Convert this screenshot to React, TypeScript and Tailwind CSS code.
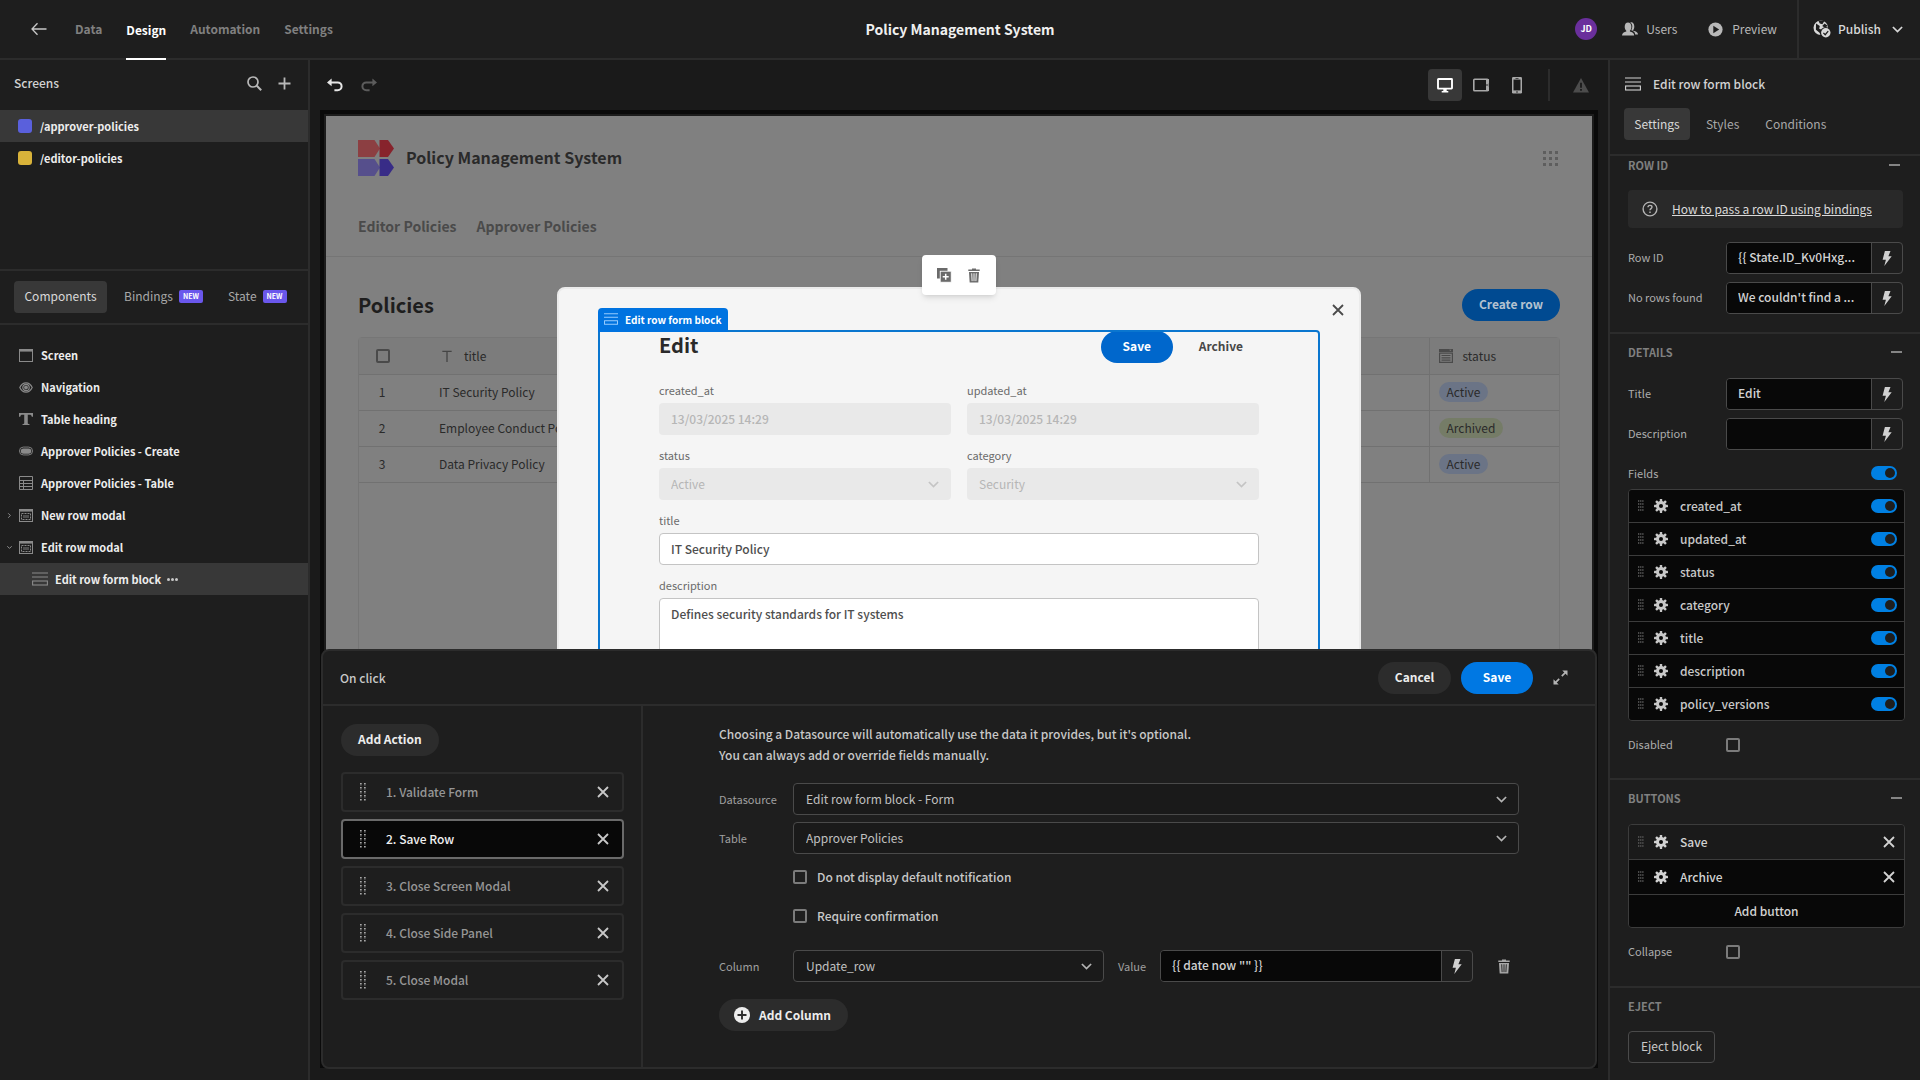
import React from 'react';
import { RiText } from 'react-icons/ri';

type IconProps = { className?: string };

const screens = [
    { path: '/approver-policies', swatch: 'bg-[#5a60dc]', selected: true },
    { path: '/editor-policies', swatch: 'bg-[#d9b33a]', selected: false },
];

const policies = [
    { id: 1, title: 'IT Security Policy', status: 'Active' },
    { id: 2, title: 'Employee Conduct Policy', status: 'Archived' },
    { id: 3, title: 'Data Privacy Policy', status: 'Active' },
];

const actions = ['Validate Form', 'Save Row', 'Close Screen Modal', 'Close Side Panel', 'Close Modal'];

const fields = ['created_at', 'updated_at', 'status', 'category', 'title', 'description', 'policy_versions'];

/* ---------- icons ---------- */

const BackIcon = () => (
    <svg width="16" height="14" viewBox="0 0 16 14" fill="none" stroke="currentColor" strokeWidth="1.3">
        <path d="M1 7h14.5M6.5 1.2 1 7l5.500 5.800" />
    </svg>
);

const SearchIcon = () => (
    <svg width="15" height="15" viewBox="0 0 15 15" fill="none" stroke="currentColor" strokeWidth="1.7">
        <circle cx="6" cy="6" r="5" />
        <path d="m9.800 9.800 4.400 4.400" strokeWidth="2" />
    </svg>
);

const PlusIcon = () => (
    <svg width="13" height="13" viewBox="0 0 13 13" fill="none" stroke="currentColor" strokeWidth="1.8">
        <path d="M6.500.500v12M.500 6.500h12" />
    </svg>
);

const UndoIcon = ({ className }: IconProps) => (
    <svg className={className} width="16" height="14" viewBox="0 0 16 14">
        <path d="M0 4.400 4.600.600v7.600z" fill="currentColor" />
        <path d="M3.500 4.400h7.200a3.800 3.800 0 0 1 0 7.800H7.400" fill="none" stroke="currentColor" strokeWidth="2" />
    </svg>
);

const ChevronDown = ({ className }: IconProps) => (
    <svg className={className} width="11" height="7" viewBox="0 0 11 7" fill="none" stroke="currentColor" strokeWidth="1.7">
        <path d="m.9 1 4.600 4.600L10.100 1" />
    </svg>
);

const CrossIcon = ({ className }: IconProps) => (
    <svg className={className} width="12" height="12" viewBox="0 0 12 12" fill="none" stroke="currentColor" strokeWidth="1.8">
        <path d="m1 1 10 10M11 1 1 11" />
    </svg>
);

const UsersIcon = () => (
    <svg width="16" height="14" viewBox="0 0 16 14" fill="currentColor">
        <path d="M10.800 8.400c1-.9 1.500-2.400 1.500-4C12.300 1.900 11.100.2 9.300.2c-.4 0-.7.1-1 .2 1.300.8 2 2.300 2 4.200 0 1.400-.4 2.700-1.100 3.700 2 .6 3.800 1.800 4 4.200H16c0-2.400-2.400-3.300-4.600-3.800-.4-.1-.6-.1-.6-.3z" />
        <path d="M6 .6C4.100.6 2.700 2.200 2.700 4.700c0 1.600.6 3.100 1.600 4v.7C2.100 9.900 0 11 0 13.600h12.200c0-2.500-2-3.700-4.300-4.200v-.7c1-.9 1.500-2.400 1.500-4C9.400 2.200 7.900.6 6 .6z" />
    </svg>
);

const PlayIcon = () => (
    <svg width="15" height="15" viewBox="0 0 15 15">
        <circle cx="7.500" cy="7.500" r="7.100" fill="currentColor" />
        <path d="M5.300 3.800 11.200 7.500l-5.900 3.700z" fill="#1e1e1e" />
    </svg>
);

const PublishIcon = () => (
    <svg width="18" height="18" viewBox="0 0 18 18">
        <circle cx="7.800" cy="7.800" r="7.300" fill="currentColor" />
        <path d="m5.200.6 1.600 2.800 2.600.8L11.500.8M3 3.400 6.800 6l-.6 2.800 2.600 1-.8 5.400-1.700-2.700-3.400-2.800M11.600 3.600 9.200 6l2.400 1.500 3.400-1.400" fill="#1e1e1e" />
        <circle cx="12.800" cy="12.800" r="5.800" fill="#1e1e1e" />
        <circle cx="12.800" cy="12.800" r="4.700" fill="currentColor" />
        <path d="m10.400 12.900 1.800 1.800 3-3.600" fill="none" stroke="#1e1e1e" strokeWidth="1.300" />
    </svg>
);

const DesktopIcon = () => (
    <svg width="16" height="15" viewBox="0 0 16 15">
        <rect x="1" y="1" width="14" height="9.600" rx=".5" fill="none" stroke="currentColor" strokeWidth="1.900" />
        <path d="M6.300 11h3.400v2h1.600v1.600H4.700V13h1.600z" fill="currentColor" />
    </svg>
);

const TabletIcon = () => (
    <svg width="16" height="14" viewBox="0 0 16 14">
        <rect x=".8" y="1.300" width="14.200" height="11.400" rx=".8" fill="none" stroke="currentColor" strokeWidth="1.600" />
        <path d="M13 1h3v4l-1 .8v2.400l1 .8v4h-3z" fill="currentColor" />
        <circle cx="14" cy="7" r=".8" fill="#1a1a1a" />
    </svg>
);

const PhoneIcon = () => (
    <svg width="10" height="17" viewBox="0 0 10 17">
        <rect width="10" height="16.500" rx="1.200" fill="currentColor" />
        <path d="M1.500 2.600h7v10.800h-7z" fill="#1a1a1a" />
        <circle cx="5" cy="15" r=".8" fill="#1a1a1a" />
        <path d="M3.500 1h3v.7h-3z" fill="#1a1a1a" />
    </svg>
);

const AlertIcon = () => (
    <svg width="16" height="15" viewBox="0 0 16 15">
        <path d="M8 0 16 14.500H0z" fill="currentColor" />
        <path d="M7.100 4.800h1.800v5H7.100zM7.100 11h1.800v1.800H7.100z" fill="#1a1a1a" />
    </svg>
);

const FormBlockIcon = ({ className }: IconProps) => (
    <svg className={className} width="16" height="14" viewBox="0 0 16 14" fill="none" stroke="currentColor" strokeWidth="1.100">
        <path d="M0 1h16M0 5h16" />
        <rect x=".6" y="9" width="14.800" height="4" />
    </svg>
);

const WindowIcon = () => (
    <svg width="14" height="13" viewBox="0 0 14 13">
        <rect x=".5" y=".5" width="13" height="12" fill="none" stroke="currentColor" />
        <path d="M0 0h14v2.600H0z" fill="currentColor" />
    </svg>
);

const EyeIcon = () => (
    <svg width="14" height="11" viewBox="0 0 14 11" fill="none" stroke="currentColor" strokeWidth="1.200">
        <path d="M.8 5.500C2.200 2.500 4.400.9 7 .9s4.800 1.600 6.200 4.600C11.800 8.500 9.600 10.100 7 10.100S2.200 8.500.8 5.500z" />
        <circle cx="7" cy="5.500" r="3.200" />
        <circle cx="7" cy="5.500" r="1.300" fill="currentColor" />
    </svg>
);

const HeadingIcon = () => (
    <svg width="15" height="14" viewBox="0 0 15 14" fill="currentColor">
        <path d="M0 .5h15v4h-1.300c-.3-1.500-1-2.100-2.500-2.100H9.400v8.800c0 .8.300 1.100 1.800 1.200v.9H3.800v-.9c1.500-.1 1.800-.4 1.800-1.200V2.400H3.800C2.300 2.400 1.600 3 1.300 4.500H0z" />
    </svg>
);

const PillIcon = () => (
    <svg width="16" height="10" viewBox="0 0 16 10">
        <rect x=".5" y=".5" width="15" height="9" rx="4.500" fill="none" stroke="currentColor" />
        <rect x="2" y="2" width="12" height="6" rx="3" fill="currentColor" />
    </svg>
);

const TableIcon = () => (
    <svg width="14" height="14" viewBox="0 0 14 14" fill="none" stroke="currentColor">
        <path d="M.5.500h13v13H.5zM.5 4.500h13M.5 7.500h13M.5 10.500h13M4.500 4.500v9" />
    </svg>
);

const ModalIcon = () => (
    <svg width="14" height="13" viewBox="0 0 14 13">
        <rect x=".5" y=".5" width="13" height="12" fill="none" stroke="currentColor" />
        <path d="M0 0h14v2.600H0z" fill="currentColor" />
        <rect x="2.500" y="4.500" width="9" height="6" fill="none" stroke="currentColor" strokeDasharray="2 1" />
        <path d="M4 6h6v3H4z" fill="currentColor" opacity=".45" />
    </svg>
);

const BoltIcon = () => (
    <svg width="10" height="15" viewBox="0 0 10 15" fill="currentColor">
        <path d="M2.900 0h5.600L6.400 5.200h3.300L2.300 15l1.600-6.200H.6z" />
    </svg>
);

const TrashIcon = ({ className }: IconProps) => (
    <svg className={className} width="12" height="15" viewBox="0 0 12 15">
        <path d="M4 .4h4v1.200h3.700v1.500H.3V1.600H4z" fill="currentColor" />
        <path d="M1 4h10l-.7 10.500H1.700z" fill="currentColor" />
        <path d="m3.700 5.300.4 7.800M6 5.300v7.800M8.300 5.300l-.4 7.800" className="stroke-(--cut)" strokeWidth=".9" fill="none" />
    </svg>
);

const DuplicateIcon = () => (
    <svg width="15" height="15" viewBox="0 0 15 15">
        <path d="M0 0h10.500v3H3v7.500H0z" fill="currentColor" />
        <rect x="3.200" y="3.200" width="11" height="11" fill="currentColor" stroke="#fff" strokeWidth=".8" />
        <path d="M8.700 5.700v6M5.700 8.700h6" stroke="#fff" strokeWidth="1.500" />
    </svg>
);

const GearIcon = () => (
    <svg width="14" height="14" viewBox="0 0 14 14">
        <g fill="currentColor">
            <circle cx="7" cy="7" r="5" />
            {[0, 45, 90, 135].map((a) => (
                <rect key={a} x="5.800" y="0" width="2.400" height="14" rx=".4" transform={`rotate(${a} 7 7)`} />
            ))}
        </g>
        <circle cx="7" cy="7" r="2" fill="#0a0a0a" />
    </svg>
);

const DragDots = ({ className }: IconProps) => (
    <svg className={className} width="6" height="12" viewBox="0 0 6 12" fill="currentColor">
        {[0, 3, 6, 9].map((y) => (
            <g key={y}>
                <rect x="0" y={y} width="1.300" height="2" />
                <rect x="2.100" y={y} width="1.300" height="2" />
                <rect x="4.200" y={y} width="1.300" height="2" />
            </g>
        ))}
    </svg>
);

const DragHandle = () => (
    <svg width="6" height="18" viewBox="0 0 6 18" fill="currentColor">
        {[0, 4, 8, 12, 16].map((y) => (
            <g key={y}>
                <rect x="0" y={y} width="1.700" height="1.500" />
                <rect x="4" y={y} width="1.700" height="1.500" />
                <rect x="0" y={y + 2} width="1.700" height=".6" opacity=".5" />
                <rect x="4" y={y + 2} width="1.700" height=".6" opacity=".5" />
            </g>
        ))}
    </svg>
);

const ExpandIcon = () => (
    <svg width="15" height="15" viewBox="0 0 15 15">
        <path d="M9.300.5h5.200v5.200zM.5 9.300v5.200h5.200z" fill="currentColor" />
        <path d="m8.800 6.200 3.500-3.500M6.200 8.800l-3.500 3.500" stroke="currentColor" strokeWidth="1.700" />
    </svg>
);

const AddCircleIcon = () => (
    <svg width="16" height="16" viewBox="0 0 16 16">
        <circle cx="8" cy="8" r="8" fill="currentColor" />
        <path d="M8 3.500v9M3.500 8h9" stroke="#2c2c2c" strokeWidth="1.900" />
    </svg>
);

const HelpIcon = () => (
    <svg width="16" height="16" viewBox="0 0 16 16" fill="none" stroke="currentColor" strokeWidth="1.400">
        <circle cx="8" cy="8" r="6.900" />
        <path d="M6 6.200C6 5 6.900 4.400 8 4.400s2 .7 2 1.700c0 1.500-2 1.500-2 3.200M8 10.500v1.500" />
    </svg>
);

const OptionsIcon = () => (
    <svg width="14" height="14" viewBox="0 0 14 14">
        <path d="M0 0h14v3H0z" fill="currentColor" />
        <path d="m10.200.8 1.100 1.300 1.100-1.300z" fill="#808080" />
        <path d="M.6 4.200h12.800v9.200H.6zM2.500 6.500h9M2.500 8.800h9M2.500 11.100h9" fill="none" stroke="currentColor" strokeWidth="1.200" />
    </svg>
);

const GridDots = () => (
    <svg width="15" height="15" viewBox="0 0 15 15" fill="currentColor">
        {[0, 6, 12].map((y) => [0, 6, 12].map((x) => <rect key={`${x}-${y}`} x={x} y={y} width="3" height="3" />))}
    </svg>
);

const Logo = () => (
    <svg width="36" height="36" viewBox="0 0 36 36">
        <path d="M0 0h16.500L22 8.500 16.500 17H0z" fill="#8c3f42" />
        <path d="M21.500 0H30l6 8.500-6 8.500h-8.500z" fill="#87232c" />
        <path d="M0 19h16.500l5.500 8.500-5.500 8.500H0z" fill="#564f8c" />
        <path d="M21.500 19H30l6 8.500-6 8.500h-8.500z" fill="#382c87" />
    </svg>
);

/* ---------- small parts ---------- */

const NewBadge = () => (
    <span className="flex h-[13px] items-center rounded-[2px] bg-[#6a57ec] px-1 text-[7px] leading-[13px] font-bold text-white">NEW</span>
);

const Toggle: React.FC<{ label: string }> = ({ label }) => (
    <input
        type="checkbox"
        role="switch"
        aria-label={label}
        defaultChecked
        className="relative h-3.5 w-[26px] shrink-0 appearance-none rounded-full bg-[#0080e3] before:absolute before:top-0.5 before:right-0.5 before:size-2.5 before:rounded-full before:bg-[#1e1e1e]"
    />
);

const Checkbox: React.FC<{ id: string }> = ({ id }) => (
    <input id={id} type="checkbox" className="size-3.5 shrink-0 appearance-none rounded-[2px] border-2 border-[#7b7b7b]" />
);

const BindingInput: React.FC<{ id: string; value: string }> = ({ id, value }) => (
    <div className="flex h-8 min-w-0 flex-1 overflow-hidden rounded-sm border border-[#4a4a4a]">
        <input id={id} defaultValue={value} className="min-w-0 flex-1 bg-[#080808] px-[11px] pb-0.5 text-xs font-medium text-[#d2d2d2]" />
        <button aria-label="Bind value" className="flex w-[31px] items-center justify-center border-l border-[#4a4a4a] text-[#d0d0d0]">
            <BoltIcon />
        </button>
    </div>
);

const PanelSelect: React.FC<{ id: string; value: string }> = ({ id, value }) => (
    <div className="relative min-w-0 flex-1">
        <select id={id} className="h-8 w-full appearance-none rounded-sm border border-[#4a4a4a] bg-[#1a1a1a] px-3 text-xs text-[#c0c0c0]">
            <option>{value}</option>
        </select>
        <ChevronDown className="pointer-events-none absolute top-[13px] right-3 text-[#b4b4b4]" />
    </div>
);

const SettingRow: React.FC<{ label: string; id: string; children: React.ReactNode }> = ({ label, id, children }) => (
    <div className="flex h-8 items-center">
        <label htmlFor={id} className="w-[98px] shrink-0 pb-px text-[11px] text-[#adadad]">{label}</label>
        {children}
    </div>
);

const SectionTitle: React.FC<{ title: string; collapsible?: boolean }> = ({ title, collapsible = true }) => (
    <div className="flex h-5 items-center justify-between pr-[3px] pb-0.5">
        <h3 className="text-[11px] font-bold text-[#808080]">{title}</h3>
        {collapsible && <button aria-label={`Collapse ${title}`} className="h-0.5 w-[11px] bg-[#858585]" />}
    </div>
);

const TreeRow: React.FC<{ icon: React.ReactNode; label: string; arrow?: 'open' | 'closed' }> = ({ icon, label, arrow }) => (
    <li className="flex h-8 items-center text-[11px] font-bold text-[#ededed]">
        <span className="flex w-[19px] justify-center text-[#8f8f8f]">
            {arrow && (
                <svg width="5" height="5" viewBox="0 0 5 5" fill="none" stroke="currentColor" className={arrow === 'closed' ? '-rotate-90' : ''}>
                    <path d="m.3 1.200 2.200 2.200 2.200-2.200" />
                </svg>
            )}
        </span>
        <span className="flex w-3.5 justify-center text-[#8a8a8a]">{icon}</span>
        <span className="ml-2">{label}</span>
    </li>
);

/* ---------- layout ---------- */

const TopBar = () => (
    <header className="grid h-[60px] shrink-0 grid-cols-[1fr_auto_1fr] border-b-2 border-[#2c2c2c] text-xs">
        <nav className="flex items-center gap-6 pl-[31px] font-bold text-[#808080]">
            <button aria-label="Back" className="mr-1 text-[#c8c8c8]"><BackIcon /></button>
            <a href="#data">Data</a>
            <a href="#design" className="-mb-0.5 flex h-[60px] items-center border-y-2 border-t-transparent border-b-white text-white">Design</a>
            <a href="#automation">Automation</a>
            <a href="#settings">Settings</a>
        </nav>
        <h1 className="flex items-center text-sm font-bold text-[#f0f0f0]">Policy Management System</h1>
        <div className="flex items-center justify-end text-[#b8b8b8]">
            <span className="mr-[25px] flex size-[22px] items-center justify-center rounded-full bg-[#6a2f9c] text-[9px] font-bold text-white">JD</span>
            <button className="mr-[31px] flex items-center gap-2"><UsersIcon />Users</button>
            <button className="mr-5 flex items-center gap-[9px]"><PlayIcon />Preview</button>
            <button className="flex h-full items-center gap-[7px] border-l-2 border-[#2c2c2c] pr-[17px] pl-3.5 font-medium text-[#d8d8d8]">
                <PublishIcon />
                Publish
                <ChevronDown className="ml-1" />
            </button>
        </div>
    </header>
);

const LeftPanel = () => (
    <aside className="flex w-[310px] shrink-0 flex-col border-r-2 border-[#2c2c2c]">
        <section className="h-[211px] border-b-2 border-[#2c2c2c]">
            <div className="flex h-[50px] items-center pr-[17px] pb-1 pl-3.5 text-[#b8b8b8]">
                <h2 className="flex-1 text-xs font-medium text-[#d2d2d2]">Screens</h2>
                <button aria-label="Search screens" className="mr-4"><SearchIcon /></button>
                <button aria-label="Add screen"><PlusIcon /></button>
            </div>
            <ul>
                {screens.map((s) => (
                    <li key={s.path} className={`flex h-8 items-center gap-2 pl-[18px] text-[11px] font-bold text-[#ededed] ${s.selected ? 'bg-[#383838]' : ''}`}>
                        <span className={`size-3.5 rounded-[3px] ${s.swatch}`} />
                        {s.path}
                    </li>
                ))}
            </ul>
        </section>
        <div className="flex h-[54px] items-center border-b-2 border-[#2c2c2c] pl-3.5 text-xs text-[#a8a8a8]">
            <button className="h-8 w-[93px] rounded-sm bg-[#383838] pb-0.5 text-[#d8d8d8]">Components</button>
            <button className="ml-[17px] flex items-center gap-1.5 pb-0.5">Bindings <NewBadge /></button>
            <button className="ml-[25px] flex items-center gap-1.5 pb-0.5">State <NewBadge /></button>
        </div>
        <ul className="pt-3.5">
            <TreeRow icon={<WindowIcon />} label="Screen" />
            <TreeRow icon={<EyeIcon />} label="Navigation" />
            <TreeRow icon={<HeadingIcon />} label="Table heading" />
            <TreeRow icon={<PillIcon />} label="Approver Policies - Create" />
            <TreeRow icon={<TableIcon />} label="Approver Policies - Table" />
            <TreeRow icon={<ModalIcon />} label="New row modal" arrow="closed" />
            <TreeRow icon={<ModalIcon />} label="Edit row modal" arrow="open" />
            <li className="flex h-8 items-center bg-[#383838] pl-8 text-[11px] font-bold text-[#ededed]">
                <FormBlockIcon className="mr-[7px] text-[#8a8a8a]" />
                Edit row form block
                <button aria-label="More" className="ml-1.5 flex gap-px text-[#c8c8c8]">
                    <span className="size-[3px] rounded-full bg-current" />
                    <span className="size-[3px] rounded-full bg-current" />
                    <span className="size-[3px] rounded-full bg-current" />
                </button>
            </li>
        </ul>
    </aside>
);

const CanvasToolbar = () => (
    <div className="flex h-[50px] shrink-0 items-center pr-[19px] pl-[17px] text-[#a8a8a8]">
        <button aria-label="Undo" className="text-[#e6e6e6]"><UndoIcon /></button>
        <button aria-label="Redo" className="ml-[18px] text-[#5c5c5c]"><UndoIcon className="-scale-x-100" /></button>
        <div className="flex-1" />
        <button aria-label="Desktop" className="flex h-8 w-[34px] items-center justify-center rounded-sm bg-[#383838] text-white"><DesktopIcon /></button>
        <button aria-label="Tablet" className="ml-[11px]"><TabletIcon /></button>
        <button aria-label="Mobile" className="ml-[23px]"><PhoneIcon /></button>
        <span className="mr-[23px] ml-[26px] h-8 w-0.5 bg-[#2c2c2c]" />
        <button aria-label="Warnings" className="text-[#4c4c4c]"><AlertIcon /></button>
    </div>
);

const AppPage = () => (
    <div className="flex h-full flex-col text-[#2a2a2a]">
        <div className="h-[141px] shrink-0 border-b border-[#757575] px-8 pt-6">
            <div className="flex items-center">
                <Logo />
                <span className="ml-3 flex-1 pb-0.5 text-base leading-[34px] font-bold">Policy Management System</span>
                <button aria-label="Apps" className="mr-0.5 text-[#5e5e5e]"><GridDots /></button>
            </div>
            <nav className="mt-[38px] flex gap-5 text-sm leading-6 font-bold text-[#4a4a4a]">
                <a href="#editor">Editor Policies</a>
                <a href="#approver">Approver Policies</a>
            </nav>
        </div>
        <div className="flex min-h-0 flex-1 flex-col px-8 pt-8">
            <div className="flex items-center justify-between">
                <h2 className="text-xl leading-8 font-bold text-[#1e1e1e]">Policies</h2>
                <button className="h-8 rounded-full bg-[#004a91] px-[17px] pb-0.5 text-xs font-bold text-[#b4c2d0]">Create row</button>
            </div>
            <div className="mt-4 flex-1 rounded-t-sm border border-[#767676]">
                <table className="w-full table-fixed border-collapse text-left text-xs">
                    <thead>
                        <tr className="h-9 border-b border-[#717171] bg-[#7c7c7c]">
                            <th className="w-[71px] pl-[17px]">
                                <input type="checkbox" aria-label="Select all" className="block size-3.5 appearance-none rounded-[2px] border-2 border-[#4a4a4a]" />
                            </th>
                            <th className="pl-[9px] font-normal">
                                <span className="flex items-center gap-[9px]"><RiText size={16} className="text-[#454545]" />title</span>
                            </th>
                            <th className="w-[130px] border-l border-[#717171] pl-[9px] font-normal">
                                <span className="flex items-center gap-2.5"><span className="text-[#4a4a4a]"><OptionsIcon /></span>status</span>
                            </th>
                        </tr>
                    </thead>
                    <tbody>
                        {policies.map((p) => (
                            <tr key={p.id} className="h-9 border-b border-[#717171]">
                                <td className="pl-4"><span className="block w-3.5 text-center">{p.id}</span></td>
                                <td className="pl-[9px]">{p.title}</td>
                                <td className="border-l border-[#717171] pl-[9px]">
                                    <span className={`inline-block rounded-[10px] px-2 leading-5 ${p.status === 'Active' ? 'bg-[#6b7486]' : 'bg-[#757c67]'}`}>{p.status}</span>
                                </td>
                            </tr>
                        ))}
                    </tbody>
                </table>
            </div>
        </div>
    </div>
);

const formLabel = 'block h-[26px] text-[11px] leading-[26px] text-[#6a6a6a]';

const EditModal = () => (
    <div className="absolute top-[171px] bottom-0 left-1/2 w-[804px] -translate-x-1/2 rounded-t-lg border-2 border-[#ebebeb] bg-[#f5f5f5]">
        <div className="flex h-[41px] items-center justify-end pr-[15px]">
            <button aria-label="Close" className="text-[#4a4a4a]"><CrossIcon /></button>
        </div>
        <form className="relative mx-[39px] h-full px-[61px] pt-px">
            {/* selection outline with its tag */}
            <div className="pointer-events-none absolute inset-0 z-10 rounded-tr-sm border-2 border-[#0a76cf]">
                <div className="absolute -top-6 -left-0.5 flex h-6 items-center gap-[7px] rounded-t-sm bg-[#0073e0] px-1.5 pb-0.5 text-[10px] font-bold text-white">
                    <FormBlockIcon className="h-3.5 w-3.5 text-[#9ccfff]" />
                    Edit row form block
                </div>
            </div>
            <div className="mb-3.5 flex h-8 items-center">
                <h2 className="flex-1 pb-1 text-xl font-bold text-[#2a2a2a]">Edit</h2>
                <button type="button" className="h-8 w-[72px] rounded-full bg-[#0067cc] pb-0.5 text-xs font-bold text-white">Save</button>
                <button type="button" className="ml-2.5 h-8 px-4 pb-0.5 text-xs font-bold text-[#474747]">Archive</button>
            </div>
            <div className="grid grid-cols-2 gap-x-4 gap-y-[7px]">
                {['created_at', 'updated_at'].map((f) => (
                    <div key={f}>
                        <label htmlFor={`f-${f}`} className={formLabel}>{f}</label>
                        <input id={`f-${f}`} disabled defaultValue="13/03/2025 14:29" className="block h-8 w-full rounded-sm bg-[#e9e9e9] px-3 pb-0.5 text-xs font-medium text-[#b6b6b6]" />
                    </div>
                ))}
                {[['status', 'Active'], ['category', 'Security']].map(([f, v]) => (
                    <div key={f} className="relative">
                        <label htmlFor={`f-${f}`} className={formLabel}>{f}</label>
                        <select id={`f-${f}`} disabled className="block h-8 w-full appearance-none rounded-sm bg-[#e9e9e9] px-3 text-xs text-[#b6b6b6] opacity-100">
                            <option>{v}</option>
                        </select>
                        <ChevronDown className="absolute right-3 bottom-3 text-[#c4c4c4]" />
                    </div>
                ))}
                <div className="col-span-2">
                    <label htmlFor="f-title" className={formLabel}>title</label>
                    <input id="f-title" defaultValue="IT Security Policy" className="block h-8 w-full rounded-sm border border-[#c4c4c4] bg-white px-[11px] pb-0.5 text-xs font-medium text-[#4e4e4e]" />
                </div>
                <div className="col-span-2">
                    <label htmlFor="f-description" className={formLabel}>description</label>
                    <textarea id="f-description" defaultValue="Defines security standards for IT systems" className="block h-[120px] w-full resize-none rounded-sm border border-[#c4c4c4] bg-white px-[11px] py-[5px] text-xs leading-5 font-medium text-[#4e4e4e]" />
                </div>
            </div>
        </form>
    </div>
);

const ActionDrawer = () => (
    <section className="absolute right-[11px] bottom-[11px] left-[11px] z-20 flex h-[420px] flex-col rounded-lg border-2 border-[#2c2c2c] bg-[#1e1e1e]">
        <div className="flex h-[55px] shrink-0 items-center border-b-2 border-[#2c2c2c] pr-[27px] pl-[17px] text-xs font-bold">
            <h2 className="flex-1 font-medium text-[#c8c8c8]">On click</h2>
            <button className="h-8 w-[73px] rounded-full bg-[#2c2c2c] pb-0.5 text-[#ededed]">Cancel</button>
            <button className="ml-2.5 h-8 w-[72px] rounded-full bg-[#0078e3] pb-0.5 text-white">Save</button>
            <button aria-label="Expand" className="ml-5 text-[#b4b4b4]"><ExpandIcon /></button>
        </div>
        <div className="flex min-h-0 flex-1">
            <div className="w-80 shrink-0 border-r-2 border-[#2c2c2c] pt-[18px] pr-[17px] pl-[18px]">
                <button className="h-8 rounded-full bg-[#2c2c2c] px-[17px] pb-0.5 text-xs font-bold text-[#ededed]">Add Action</button>
                <ol className="mt-4 flex flex-col gap-[7px]">
                    {actions.map((name, i) => (
                        <li
                            key={name}
                            className={`flex h-10 items-center rounded-sm border-2 pr-[13px] pl-[17px] text-xs font-medium ${i === 1 ? 'border-[#6a6a6a] bg-[#080808] text-[#f0f0f0]' : 'border-[#2c2c2c] text-[#969696]'}`}
                        >
                            <span className="text-[#a8a8a8]"><DragHandle /></span>
                            <span className="ml-5 flex-1">{i + 1}. {name}</span>
                            <button aria-label={`Remove ${name}`} className="text-[#c8c8c8]"><CrossIcon /></button>
                        </li>
                    ))}
                </ol>
            </div>
            <div className="flex-1 px-[76px] pt-[17px] text-[11px] text-[#a0a0a0]">
                <p className="text-xs leading-[21px] font-medium text-[#c8c8c8]">
                    Choosing a Datasource will automatically use the data it provides, but it's optional.
                    <br />
                    You can always add or override fields manually.
                </p>
                <div className="mt-[18px] flex items-center">
                    <label htmlFor="datasource" className="w-[74px]">Datasource</label>
                    <PanelSelect id="datasource" value="Edit row form block - Form" />
                </div>
                <div className="mt-[7px] flex items-center">
                    <label htmlFor="table" className="w-[74px]">Table</label>
                    <PanelSelect id="table" value="Approver Policies" />
                </div>
                <div className="mt-[7px] flex h-8 items-center gap-2.5 pl-[74px] text-xs font-medium text-[#c8c8c8]">
                    <Checkbox id="quiet" />
                    <label htmlFor="quiet">Do not display default notification</label>
                </div>
                <div className="mt-[7px] flex h-8 items-center gap-2.5 pl-[74px] text-xs font-medium text-[#c8c8c8]">
                    <Checkbox id="confirm" />
                    <label htmlFor="confirm">Require confirmation</label>
                </div>
                <div className="mt-[18px] flex items-center">
                    <label htmlFor="column" className="w-[74px]">Column</label>
                    <PanelSelect id="column" value="Update_row" />
                    <label htmlFor="value" className="w-14 pl-3.5">Value</label>
                    <BindingInput id="value" value={'{{ date now "" }}'} />
                    <button aria-label="Delete column" className="mr-2 ml-6 px-px text-[#a8a8a8] [--cut:#1e1e1e]"><TrashIcon /></button>
                </div>
                <button className="mt-[17px] flex h-8 items-center gap-[9px] rounded-full bg-[#2c2c2c] pr-[17px] pl-[15px] text-xs font-bold text-[#ededed]">
                    <AddCircleIcon />
                    Add Column
                </button>
            </div>
        </div>
    </section>
);

const RightPanel = () => (
    <aside className="flex w-[312px] shrink-0 flex-col border-l-2 border-[#2c2c2c]">
        <div className="h-24 border-b-2 border-[#2c2c2c] pl-3.5">
            <div className="flex h-12 items-center gap-3 pl-px text-xs font-medium text-[#d2d2d2]">
                <FormBlockIcon />
                Edit row form block
            </div>
            <div className="flex text-xs text-[#a8a8a8]">
                <button className="h-8 w-[66px] rounded-sm bg-[#383838] text-[#d8d8d8]">Settings</button>
                <button className="ml-4">Styles</button>
                <button className="ml-[26px]">Conditions</button>
            </div>
        </div>
        <section className="h-[178px] border-b-2 border-[#2c2c2c] pr-[17px] pl-[18px]">
            <SectionTitle title="ROW ID" />
            <div className="mt-3.5 flex h-[38px] items-center gap-3.5 rounded-sm bg-[#292929] pl-3.5 text-[#b4b4b4]">
                <HelpIcon />
                <a href="#help" className="text-xs text-[#dadada] underline">How to pass a row ID using bindings</a>
            </div>
            <div className="mt-3.5 flex flex-col gap-2">
                <SettingRow label="Row ID" id="row-id"><BindingInput id="row-id" value="{{ State.ID_Kv0Hxg..." /></SettingRow>
                <SettingRow label="No rows found" id="no-rows"><BindingInput id="no-rows" value="We couldn't find a ..." /></SettingRow>
            </div>
        </section>
        <section className="h-[446px] border-b-2 border-[#2c2c2c] pt-[9px] pr-[15px] pl-[18px]">
            <SectionTitle title="DETAILS" />
            <div className="mt-[15px] mr-0.5 flex flex-col gap-2">
                <SettingRow label="Title" id="title"><BindingInput id="title" value="Edit" /></SettingRow>
                <SettingRow label="Description" id="description"><BindingInput id="description" value="" /></SettingRow>
            </div>
            <div className="mt-[7px] flex h-8 items-center justify-between pr-2 text-[11px] text-[#adadad]">
                Fields
                <Toggle label="All fields" />
            </div>
            <ul className="overflow-hidden rounded-sm border border-[#3c3c3c]">
                {fields.map((f) => (
                    <li key={f} className="flex h-[33px] items-center border-b border-[#3c3c3c] bg-[#080808] pr-[7px] pl-[9px] text-xs font-medium text-[#c8c8c8] last:h-8 last:border-b-0">
                        <DragDots className="text-[#4a4a4a]" />
                        <button aria-label={`Edit ${f}`} className="mr-3 ml-2.5"><GearIcon /></button>
                        <span className="flex-1">{f}</span>
                        <Toggle label={f} />
                    </li>
                ))}
            </ul>
            <div className="mt-2"><SettingRow label="Disabled" id="disabled"><Checkbox id="disabled" /></SettingRow></div>
        </section>
        <section className="h-[208px] border-b-2 border-[#2c2c2c] pt-[9px] pr-[15px] pl-[18px]">
            <SectionTitle title="BUTTONS" />
            <ul className="mt-[15px] overflow-hidden rounded-sm border border-[#3c3c3c] text-xs font-medium text-[#d2d2d2]">
                {['Save', 'Archive'].map((b, i) => (
                    <li key={b} className={`flex h-[35px] items-center border-b border-[#3c3c3c] px-[9px] ${i === 0 ? 'bg-[#1a1a1a]' : 'bg-[#080808]'}`}>
                        <DragDots className="text-[#4a4a4a]" />
                        <button aria-label={`Edit ${b}`} className="mr-3 ml-2.5"><GearIcon /></button>
                        <span className="flex-1">{b}</span>
                        <button aria-label={`Remove ${b}`}><CrossIcon /></button>
                    </li>
                ))}
                <li className="bg-[#080808]"><button className="h-8 w-full">Add button</button></li>
            </ul>
            <div className="mt-2"><SettingRow label="Collapse" id="collapse"><Checkbox id="collapse" /></SettingRow></div>
        </section>
        <section className="pt-[9px] pl-[18px]">
            <SectionTitle title="EJECT" collapsible={false} />
            <button className="mt-3.5 h-8 rounded-sm border border-[#4a4a4a] px-3 pb-0.5 text-xs text-[#c8c8c8]">Eject block</button>
        </section>
    </aside>
);

export default function App() {
    return (
        <div className="flex h-screen flex-col overflow-hidden bg-[#1e1e1e] font-['Noto_Sans_CJK_SC',sans-serif]">
            <TopBar />
            <div className="flex min-h-0 flex-1">
                <LeftPanel />
                <main className="relative flex min-w-0 flex-1 flex-col bg-[#1a1a1a]">
                    <CanvasToolbar />
                    <div className="mx-2.5 mb-3 min-h-0 flex-1 border-4 border-[#0a0a0a]">
                        <div className="relative h-full overflow-hidden border-2 border-[#1c1c1c] bg-[#808080]">
                            <AppPage />
                            <EditModal />
                            <div className="absolute top-[139px] left-1/2 z-20 flex h-10 w-[74px] -translate-x-[37px] items-center justify-center gap-4 rounded-sm bg-white pr-0.5 text-[#6a6a6a] shadow-md [--cut:#fff]">
                                <button aria-label="Duplicate"><DuplicateIcon /></button>
                                <button aria-label="Delete"><TrashIcon /></button>
                            </div>
                        </div>
                    </div>
                    <ActionDrawer />
                </main>
                <RightPanel />
            </div>
        </div>
    );
}
